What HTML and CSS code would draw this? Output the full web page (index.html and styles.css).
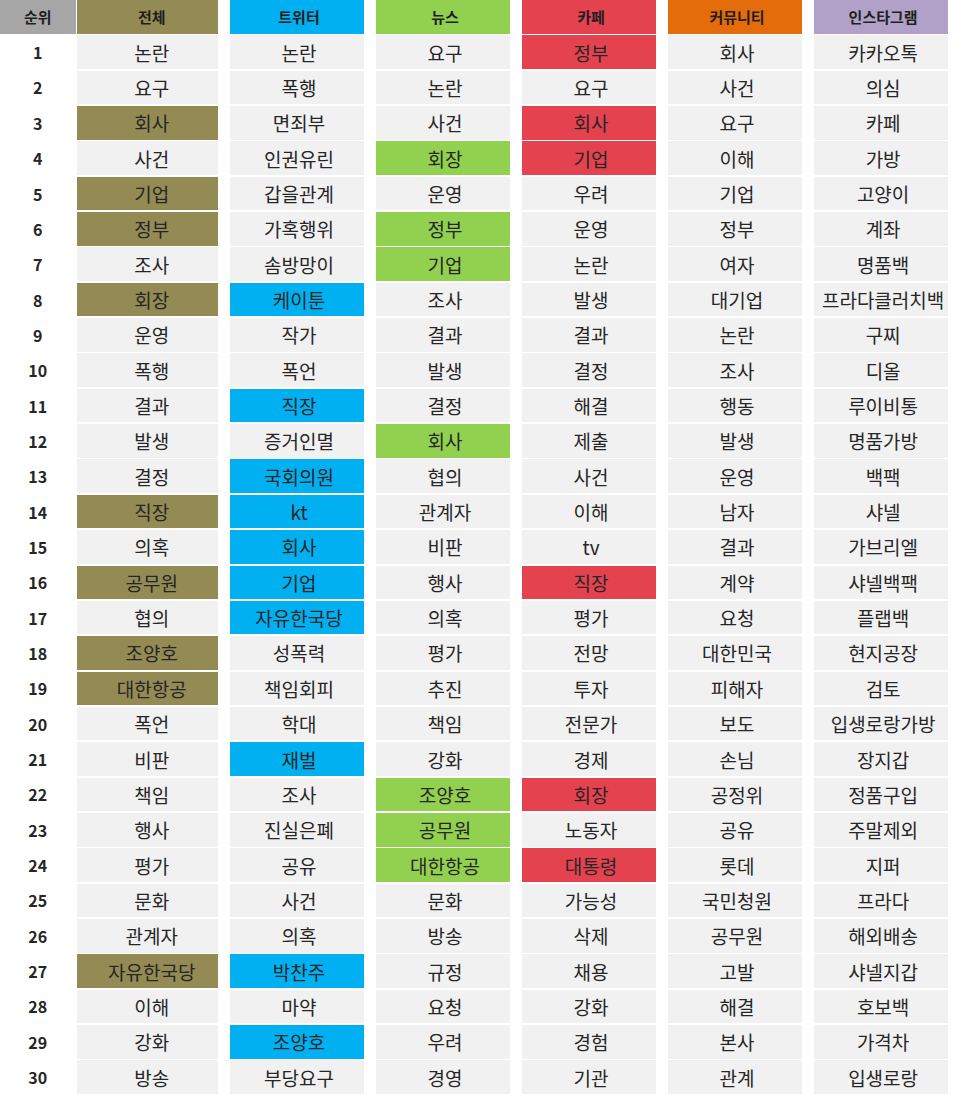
FILE: index.html
```html
<!DOCTYPE html>
<html lang="ko">
<head>
<meta charset="utf-8">
<title>키워드 순위</title>
<link rel="stylesheet" href="styles.css">
</head>
<body>
<div class="board">
  <div class="col rank">
    <div class="cell head">순위</div>
    <div class="cell">1</div><div class="cell">2</div><div class="cell">3</div><div class="cell">4</div><div class="cell">5</div>
    <div class="cell">6</div><div class="cell">7</div><div class="cell">8</div><div class="cell">9</div><div class="cell">10</div>
    <div class="cell">11</div><div class="cell">12</div><div class="cell">13</div><div class="cell">14</div><div class="cell">15</div>
    <div class="cell">16</div><div class="cell">17</div><div class="cell">18</div><div class="cell">19</div><div class="cell">20</div>
    <div class="cell">21</div><div class="cell">22</div><div class="cell">23</div><div class="cell">24</div><div class="cell">25</div>
    <div class="cell">26</div><div class="cell">27</div><div class="cell">28</div><div class="cell">29</div><div class="cell">30</div>
  </div>
  <div class="col all">
    <div class="cell head">전체</div>
    <div class="cell">논란</div><div class="cell">요구</div><div class="cell hl">회사</div><div class="cell">사건</div><div class="cell hl">기업</div>
    <div class="cell hl">정부</div><div class="cell">조사</div><div class="cell hl">회장</div><div class="cell">운영</div><div class="cell">폭행</div>
    <div class="cell">결과</div><div class="cell">발생</div><div class="cell">결정</div><div class="cell hl">직장</div><div class="cell">의혹</div>
    <div class="cell hl">공무원</div><div class="cell">협의</div><div class="cell hl">조양호</div><div class="cell hl">대한항공</div><div class="cell">폭언</div>
    <div class="cell">비판</div><div class="cell">책임</div><div class="cell">행사</div><div class="cell">평가</div><div class="cell">문화</div>
    <div class="cell">관계자</div><div class="cell hl">자유한국당</div><div class="cell">이해</div><div class="cell">강화</div><div class="cell">방송</div>
  </div>
  <div class="col twitter">
    <div class="cell head">트위터</div>
    <div class="cell">논란</div><div class="cell">폭행</div><div class="cell">면죄부</div><div class="cell">인권유린</div><div class="cell">갑을관계</div>
    <div class="cell">가혹행위</div><div class="cell">솜방망이</div><div class="cell hl">케이툰</div><div class="cell">작가</div><div class="cell">폭언</div>
    <div class="cell hl">직장</div><div class="cell">증거인멸</div><div class="cell hl">국회의원</div><div class="cell hl">kt</div><div class="cell hl">회사</div>
    <div class="cell hl">기업</div><div class="cell hl">자유한국당</div><div class="cell">성폭력</div><div class="cell">책임회피</div><div class="cell">학대</div>
    <div class="cell hl">재벌</div><div class="cell">조사</div><div class="cell">진실은폐</div><div class="cell">공유</div><div class="cell">사건</div>
    <div class="cell">의혹</div><div class="cell hl">박찬주</div><div class="cell">마약</div><div class="cell hl">조양호</div><div class="cell">부당요구</div>
  </div>
  <div class="col news">
    <div class="cell head">뉴스</div>
    <div class="cell">요구</div><div class="cell">논란</div><div class="cell">사건</div><div class="cell hl">회장</div><div class="cell">운영</div>
    <div class="cell hl">정부</div><div class="cell hl">기업</div><div class="cell">조사</div><div class="cell">결과</div><div class="cell">발생</div>
    <div class="cell">결정</div><div class="cell hl">회사</div><div class="cell">협의</div><div class="cell">관계자</div><div class="cell">비판</div>
    <div class="cell">행사</div><div class="cell">의혹</div><div class="cell">평가</div><div class="cell">추진</div><div class="cell">책임</div>
    <div class="cell">강화</div><div class="cell hl">조양호</div><div class="cell hl">공무원</div><div class="cell hl">대한항공</div><div class="cell">문화</div>
    <div class="cell">방송</div><div class="cell">규정</div><div class="cell">요청</div><div class="cell">우려</div><div class="cell">경영</div>
  </div>
  <div class="col cafe">
    <div class="cell head">카페</div>
    <div class="cell hl">정부</div><div class="cell">요구</div><div class="cell hl">회사</div><div class="cell hl">기업</div><div class="cell">우려</div>
    <div class="cell">운영</div><div class="cell">논란</div><div class="cell">발생</div><div class="cell">결과</div><div class="cell">결정</div>
    <div class="cell">해결</div><div class="cell">제출</div><div class="cell">사건</div><div class="cell">이해</div><div class="cell">tv</div>
    <div class="cell hl">직장</div><div class="cell">평가</div><div class="cell">전망</div><div class="cell">투자</div><div class="cell">전문가</div>
    <div class="cell">경제</div><div class="cell hl">회장</div><div class="cell">노동자</div><div class="cell hl">대통령</div><div class="cell">가능성</div>
    <div class="cell">삭제</div><div class="cell">채용</div><div class="cell">강화</div><div class="cell">경험</div><div class="cell">기관</div>
  </div>
  <div class="col community">
    <div class="cell head">커뮤니티</div>
    <div class="cell">회사</div><div class="cell">사건</div><div class="cell">요구</div><div class="cell">이해</div><div class="cell">기업</div>
    <div class="cell">정부</div><div class="cell">여자</div><div class="cell">대기업</div><div class="cell">논란</div><div class="cell">조사</div>
    <div class="cell">행동</div><div class="cell">발생</div><div class="cell">운영</div><div class="cell">남자</div><div class="cell">결과</div>
    <div class="cell">계약</div><div class="cell">요청</div><div class="cell">대한민국</div><div class="cell">피해자</div><div class="cell">보도</div>
    <div class="cell">손님</div><div class="cell">공정위</div><div class="cell">공유</div><div class="cell">롯데</div><div class="cell">국민청원</div>
    <div class="cell">공무원</div><div class="cell">고발</div><div class="cell">해결</div><div class="cell">본사</div><div class="cell">관계</div>
  </div>
  <div class="col insta">
    <div class="cell head">인스타그램</div>
    <div class="cell">카카오톡</div><div class="cell">의심</div><div class="cell">카페</div><div class="cell">가방</div><div class="cell">고양이</div>
    <div class="cell">계좌</div><div class="cell">명품백</div><div class="cell">프라다클러치백</div><div class="cell">구찌</div><div class="cell">디올</div>
    <div class="cell">루이비통</div><div class="cell">명품가방</div><div class="cell">백팩</div><div class="cell">샤넬</div><div class="cell">가브리엘</div>
    <div class="cell">샤넬백팩</div><div class="cell">플랩백</div><div class="cell">현지공장</div><div class="cell">검토</div><div class="cell">입생로랑가방</div>
    <div class="cell">장지갑</div><div class="cell">정품구입</div><div class="cell">주말제외</div><div class="cell">지퍼</div><div class="cell">프라다</div>
    <div class="cell">해외배송</div><div class="cell">샤넬지갑</div><div class="cell">호보백</div><div class="cell">가격차</div><div class="cell">입생로랑</div>
  </div>
</div>
</body>
</html>
```

FILE: styles.css
```css
html, body {
  margin: 0;
  padding: 0;
  background: #ffffff;
}

body {
  width: 960px;
  height: 1101px;
  overflow: hidden;
  font-family: "Noto Sans CJK KR", "Noto Sans", sans-serif;
  color: #262626;
}

.board {
  display: flex;
  align-items: flex-start;
}

.col {
  display: flex;
  flex-direction: column;
  gap: 1.75px;
  width: 135px;
  margin-right: 11.75px;
}

.col.rank {
  width: 76px;
  margin-right: 1px;
}

.col.all {
  width: 142px;
  margin-right: 12px;
}

.cell {
  box-sizing: border-box;
  height: 33.6px;
  padding-left: 4px;
  display: flex;
  align-items: center;
  justify-content: center;
  background: #f1f1f1;
  font-size: 19px;
  line-height: 1;
  white-space: nowrap;
}

.all .cell {
  padding-left: 9px;
}

.cell.head {
  font-size: 15px;
  font-weight: 700;
  color: #1f1f1f;
}

.rank .cell {
  padding-left: 0;
  background: transparent;
  font-size: 16px;
  font-weight: 700;
}

.rank .cell.head {
  background: #a6a6a6;
  font-size: 15px;
}

.all .head, .all .hl { background: #948a54; }
.twitter .head, .twitter .hl { background: #00b0f0; }
.news .head, .news .hl { background: #92d050; }
.cafe .head, .cafe .hl { background: #e5424f; }
.community .head { background: #e46c0a; }
.insta .head { background: #b1a0c7; }
```
